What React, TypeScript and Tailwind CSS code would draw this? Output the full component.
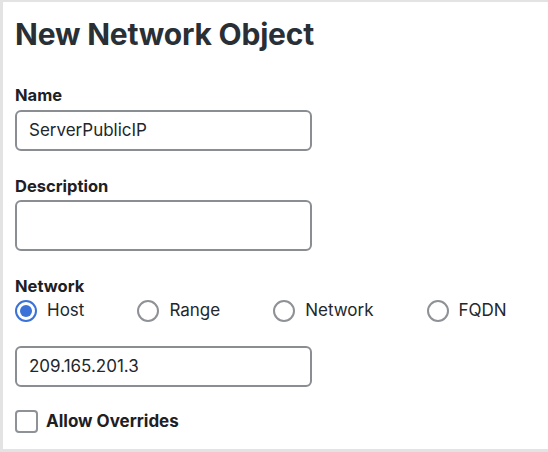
const font = { fontFamily: "Inter, 'Noto Sans', sans-serif" };

function Field({ value, tall }: { value?: string; tall?: boolean }) {
  return (
    <div
      className={`flex w-[297px] items-center rounded-[6px] border-2 border-[#8a8d91] px-3 text-[17px] text-[#23272c] ${
        tall ? "h-[51px]" : "h-[41px]"
      }`}
    >
      {value}
    </div>
  );
}

function Radio({ label, checked }: { label: string; checked?: boolean }) {
  return (
    <label className="flex items-center gap-[10px]">
      {checked ? (
        <span className="flex size-[22px] items-center justify-center rounded-full border-2 border-[#3a72d8]">
          <span className="size-[12px] rounded-full bg-[#3a72d8]" />
        </span>
      ) : (
        <span className="size-[22px] rounded-full border-2 border-[#8e9195]" />
      )}
      <span className="text-[17px] text-[#23272c]">{label}</span>
    </label>
  );
}

function Label({ children }: { children: string }) {
  return <div className="text-[16.5px] leading-5 font-bold text-[#1d2024]">{children}</div>;
}

export default function App() {
  return (
    <div
      style={font}
      className="h-[452px] w-[548px] border-t-2 border-b-[3px] border-l-[3px] border-[#e3e3e3] bg-white pt-[14px] pl-3"
    >
      <h1 className="text-[30px] leading-9 font-bold tracking-[-0.2px] text-[#2a2f35]">
        New Network Object
      </h1>

      <div className="mt-[33px] flex flex-col gap-[5px]">
        <Label>Name</Label>
        <Field value="ServerPublicIP" />
      </div>

      <div className="mt-[25px] flex flex-col gap-[4px]">
        <Label>Description</Label>
        <Field tall />
      </div>

      <div className="mt-[25px]">
        <Label>Network</Label>
        <div className="mt-[3px] flex h-6 items-center gap-[53px]">
          <Radio label="Host" checked />
          <Radio label="Range" />
          <Radio label="Network" />
          <Radio label="FQDN" />
        </div>
      </div>

      <div className="mt-[23px]">
        <Field value="209.165.201.3" />
      </div>

      <label className="mt-[22px] flex items-center gap-[8px]">
        <span className="size-[23px] rounded-[4px] border-2 border-[#8e9195]" />
        <span className="text-[17px] font-bold text-[#1d2024]">Allow Overrides</span>
      </label>
    </div>
  );
}
